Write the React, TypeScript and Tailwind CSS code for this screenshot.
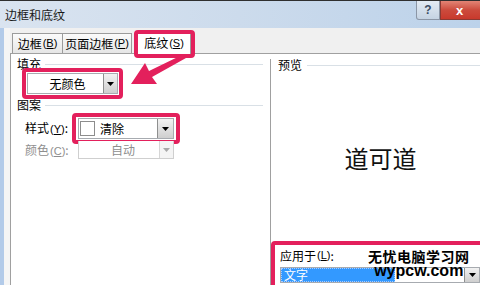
import React from "react";

const PINK = "border-[#e3205c]";

function Mn({ k }: { k: string }) {
  return (
    <span className="text-[11px] font-['Liberation_Sans',sans-serif] ml-px whitespace-nowrap">
      (<span className="underline">{k}</span>)
    </span>
  );
}

function ArrowBtn({ disabled, w = "w-[14px]" }: { disabled?: boolean; w?: string }) {
  return (
    <div
      className={`${w} h-full flex items-center justify-center border-l ${
        disabled ? "border-[#d6d6d6] bg-[#f4f4f4]" : "border-[#8e8f8f] bg-gradient-to-b from-[#f2f2f2] to-[#cfcfcf]"
      }`}
    >
      <svg width="7" height="4" viewBox="0 0 7 4">
        <polygon points="0,0 7,0 3.5,4" fill={disabled ? "#a8a8a8" : "#000"} />
      </svg>
    </div>
  );
}

export default function App() {
  return (
    <div className="w-[480px] h-[285px] overflow-hidden relative bg-[#f0f0f0] flex flex-col text-[12px] leading-none text-black font-['Noto_Sans_CJK_SC','Liberation_Sans',sans-serif]">
      {/* title bar */}
      <div className="h-[28px] shrink-0 border-t border-[#2f2f2f] bg-gradient-to-r from-[#dae4f0] via-[#ccdbec] to-[#bcd2ea] flex items-start">
        <div className="pl-[5px] pt-[7px] text-[12px] leading-[14px] text-[#1a1a1a]">边框和底纹</div>
        <div className="ml-auto flex h-[19px]">
          <div className="w-[24px] h-full rounded-bl-[3px] border border-t-0 border-[#8b96a6] bg-gradient-to-b from-[#e3ebf4] to-[#c5d3e3] flex items-center justify-center text-[12px] font-bold text-[#3b4c63] font-['Liberation_Sans',sans-serif]">
            ?
          </div>
          <div className="w-[40px] h-full border-b border-l border-[#8a3a33] bg-gradient-to-b from-[#e28475] via-[#cc4b3d] to-[#c8392c] flex items-center pl-[15px] text-[13px] font-bold text-white font-['Liberation_Sans',sans-serif]">
            x
          </div>
        </div>
      </div>

      {/* body */}
      <div className="flex-1 flex min-h-0">
        <div className="w-[4px] shrink-0 bg-[#b3cbe9]" />
        <div className="w-[6px] shrink-0 bg-[#f5f5f5]" />
        <div className="flex-1 flex flex-col min-w-0">
          {/* tabs */}
          <div className="h-[25px] shrink-0 flex items-end pl-[2px] bg-[#f0f0f0] whitespace-nowrap">
            <div className="w-[51px] h-[20px] border border-b-0 border-[#9b9b9b] bg-gradient-to-b from-[#fbfbfb] to-[#e6e6e6] flex items-center justify-center">
              边框<Mn k="B" />
            </div>
            <div className="w-[69px] h-[20px] border border-b-0 border-l-0 border-[#9b9b9b] bg-gradient-to-b from-[#fbfbfb] to-[#e6e6e6] flex items-center justify-center">
              页面边框<Mn k="P" />
            </div>
            <div className="relative ml-[5px] w-[54px] h-[23px] bg-white border border-b-0 border-[#9b9b9b] flex items-center justify-center z-10 -mb-px">
              底纹<Mn k="S" />
              <div className={`absolute -left-[4px] -right-[5px] -top-[2px] -bottom-[4px] border-[4px] ${PINK} rounded-[4px]`} />
            </div>
          </div>

          {/* panel */}
          <div className="flex-1 bg-white border-t border-l border-[#a0a0a0] flex min-h-0">
            {/* left column */}
            <div className="w-[252px] shrink-0 flex flex-col pl-[6px] pt-[3px]">
              <div className="h-[14px] shrink-0 flex items-center">
                <span>填充</span>
                <div className="flex-1 h-px bg-[#d9e0e6] ml-[4px]" />
              </div>
              <div className={`shrink-0 ml-[5px] -mt-[3px] w-[101px] h-[31px] border-[4px] ${PINK} rounded-[4px] p-px`}>
                <div className="h-full border border-[#a7abb0] bg-white flex">
                  <div className="flex-1 flex items-center justify-center pl-[4px]">无颜色</div>
                  <ArrowBtn />
                </div>
              </div>
              <div className="h-[14px] shrink-0 -mt-px flex items-center">
                <span>图案</span>
                <div className="flex-1 h-px bg-[#d9e0e6] ml-[4px]" />
              </div>
              <div className="shrink-0 flex items-center mt-px pl-[8px]">
                <span className="w-[47px] whitespace-nowrap">
                  样式<Mn k="Y" />:
                </span>
                <div className={`w-[108px] h-[31px] border-[4px] ${PINK} rounded-[4px] py-px px-[2px]`}>
                  <div className="h-full border border-[#a7abb0] bg-white flex items-center">
                    <div className="w-[15px] h-[15px] border border-[#8d8d8d] bg-white ml-px" />
                    <span className="ml-[5px] flex-1">清除</span>
                    <ArrowBtn w="w-[16px]" />
                  </div>
                </div>
              </div>
              <div className="shrink-0 flex items-start -mt-[3px] pl-[8px]">
                <span className="w-[53px] text-[#8e8e8e] pt-[3px] whitespace-nowrap">
                  颜色<Mn k="C" />:
                </span>
                <div className="w-[96px] h-[18px] border border-t-0 border-[#cfcfcf] bg-white flex">
                  <div className="flex-1 flex items-center justify-center text-[#8e8e8e] pl-[8px]">自动</div>
                  <ArrowBtn disabled />
                </div>
              </div>
            </div>

            {/* right column */}
            <div className="w-[220px] shrink-0 ml-[7px] mt-[5px] border-l border-[#a0a0a0] flex flex-col">
              <div className="h-[12px] shrink-0 flex items-center pl-[7px]">
                <span>预览</span>
                <div className="flex-1 h-px bg-[#d9e0e6] ml-[5px]" />
              </div>
              <div className="h-[170px] shrink-0 flex items-center justify-center text-[24px] text-[#111] font-['Noto_Sans_CJK_SC',serif] pt-[4px]">
                道可道
              </div>
              <div className={`h-[60px] shrink-0 border-[4px] ${PINK} rounded-[4px] pl-[5px] pr-[6px] pt-[4px] flex flex-col`}>
                <div className="h-[13px] flex items-center whitespace-nowrap">
                  应用于<Mn k="L" />:
                </div>
                <div className="mt-[5px] h-[16px] border border-[#a7abb0] bg-white flex">
                  <div className="w-[114px] bg-[#3399ff] text-white flex items-center pl-[2px] border border-dotted border-[#aaccff]">
                    文字
                  </div>
                  <div className="flex-1" />
                  <ArrowBtn w="w-[15px]" />
                </div>
              </div>
            </div>
          </div>
        </div>
      </div>

      {/* arrow overlay */}
      <svg className="absolute left-0 top-0 pointer-events-none" width="480" height="285" viewBox="0 0 480 285">
        <polygon
          points="131,84 145,63 149,71 184,54 186,58 152,77 157,84"
          fill="#e3205c"
        />
      </svg>

      {/* watermark */}
      <div className="absolute left-[368px] top-[248px] flex flex-col items-center pointer-events-none">
        <div className="text-[14px] font-bold tracking-[0.5px] leading-[16px] text-black">无忧电脑学习网</div>
        <div className="text-[16px] font-bold leading-[16px] text-black font-['Liberation_Sans',sans-serif] -mt-px">wypcw.com</div>
      </div>
    </div>
  );
}
